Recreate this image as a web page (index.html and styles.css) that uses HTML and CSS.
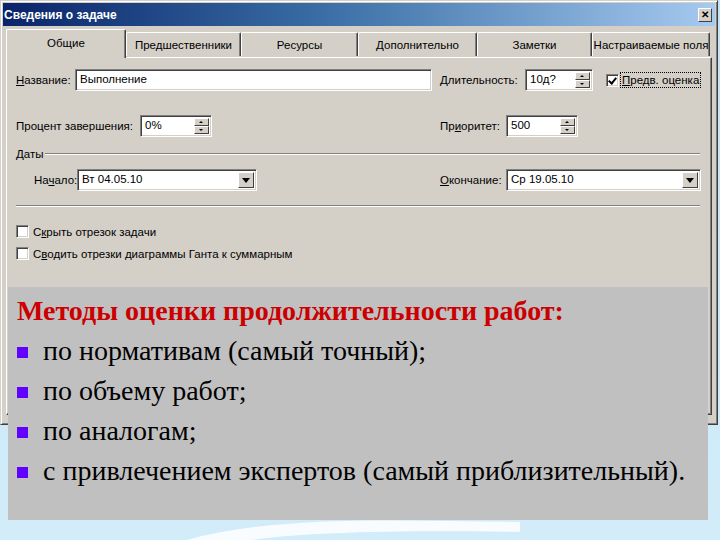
FILE: index.html
```html
<!DOCTYPE html>
<html lang="ru">
<head>
    <meta charset="UTF-8">
    <title>Сведения о задаче</title>
    <link rel="stylesheet" href="styles.css">
</head>
<body>
<div class="desk">
    <svg class="swoosh" width="720" height="120" viewBox="0 0 720 120">
        <path d="M170 125 C 260 95, 380 100, 520 102 L 520 112 C 390 110, 280 112, 225 125 Z" fill="#ffffff" opacity="0.85"/>
    </svg>

    <div class="window">
        <div class="titlebar">
            <span class="title">Сведения о задаче</span>
            <span class="close">&#x2715;</span>
        </div>

        <div class="tabs">
            <div class="tab active" style="width:120px">Общие</div>
            <div class="tab" style="width:115px">Предшественники</div>
            <div class="tab" style="width:117px">Ресурсы</div>
            <div class="tab" style="width:119px">Дополнительно</div>
            <div class="tab" style="width:115px">Заметки</div>
            <div class="tab" style="width:118px">Настраиваемые поля</div>
        </div>

        <div class="panel">
            <div class="row row-name">
                <div class="left">
                    <span class="lbl lbl-name"><u>Н</u>азвание:</span>
                    <div class="field name-field">Выполнение</div>
                </div>
                <div class="right">
                    <span class="lbl lbl-dur"><u>Д</u>лительность:</span>
                    <div class="field spin-field dur-field">10д?<span class="spin"><i class="up"></i><i class="down"></i></span></div>
                    <span class="check checked"></span>
                    <span class="focus"><u>П</u>редв. оценка</span>
                </div>
            </div>

            <div class="row row-pct">
                <div class="left">
                    <span class="lbl lbl-pct">Процент завершения:</span>
                    <div class="field spin-field pct-field">0%<span class="spin"><i class="up"></i><i class="down"></i></span></div>
                </div>
                <div class="right">
                    <span class="lbl lbl-short">Пр<u>и</u>оритет:</span>
                    <div class="field spin-field prio-field">500<span class="spin"><i class="up"></i><i class="down"></i></span></div>
                </div>
            </div>

            <div class="group">
                <span>Даты</span>
                <div class="etched"></div>
            </div>

            <div class="row row-dates">
                <div class="left indent">
                    <span class="lbl lbl-start">На<u>ч</u>ало:</span>
                    <div class="field combo start-field">Вт 04.05.10<span class="drop"><i></i></span></div>
                </div>
                <div class="right">
                    <span class="lbl lbl-short"><u>О</u>кончание:</span>
                    <div class="field combo end-field">Ср 19.05.10<span class="drop"><i></i></span></div>
                </div>
            </div>

            <div class="etched separator"></div>

            <div class="opt">
                <span class="check"></span>
                <span>С<u>к</u>рыть отрезок задачи</span>
            </div>
            <div class="opt">
                <span class="check"></span>
                <span>С<u>в</u>одить отрезки диаграммы Ганта к суммарным</span>
            </div>
        </div>
    </div>

    <div class="note">
        <h2>Методы оценки продолжительности работ:</h2>
        <ul>
            <li>по нормативам (самый точный);</li>
            <li>по объему работ;</li>
            <li>по аналогам;</li>
            <li>с привлечением экспертов (самый приблизительный).</li>
        </ul>
    </div>
</div>
</body>
</html>
```

FILE: styles.css
```css
/* страница слайда */
body {
    margin: 0;
    background-color: #c9e7f6;
}

.desk {
    position: relative;
    width: 720px;
    height: 540px;
    overflow: hidden;
    background: linear-gradient(180deg, #c3e2f4 0%, #d2ecf9 100%);
}

.swoosh {
    position: absolute;
    left: 0;
    bottom: 0;
}

/* окно диалога */
.window {
    position: relative;
    width: 718px;
    height: 425px;
    box-sizing: border-box;
    padding: 2px;
    background-color: #d4d0c8;
    border: 1px solid;
    border-color: #d4d0c8 #404040 #404040 #d4d0c8;
    box-shadow: inset 1px 1px #ffffff, inset -1px -1px #808080;
    font-family: "Liberation Sans", Arial, sans-serif;
    font-size: 11.5px;
    color: #000;
}

.titlebar {
    display: flex;
    align-items: center;
    justify-content: space-between;
    height: 23px;
    padding: 0 3px 0 1px;
    background: linear-gradient(90deg, #0a246a 0%, #3a6ea5 45%, #a6caf0 100%);
}

.title {
    color: #fff;
    font-weight: bold;
    font-size: 12px;
}

.close {
    width: 14px;
    height: 14px;
    box-sizing: border-box;
    background-color: #d4d0c8;
    border: 1px solid;
    border-color: #fff #404040 #404040 #fff;
    font-size: 10px;
    font-weight: bold;
    line-height: 12px;
    text-align: center;
}

/* вкладки */
.tabs {
    display: flex;
    align-items: flex-end;
    height: 28px;
    margin: 3px 0 0 3px;
    position: relative;
    z-index: 1;
}

.tab {
    height: 24px;
    box-sizing: border-box;
    border: 1px solid;
    border-color: #fff #404040 transparent #fff;
    border-bottom: none;
    border-radius: 2px 2px 0 0;
    box-shadow: inset -1px 0 #808080;
    text-align: center;
    line-height: 24px;
    white-space: nowrap;
    overflow: hidden;
    margin-bottom: 1px;
}

.tab.active {
    height: 29px;
    margin-bottom: -1px;
    line-height: 26px;
    background-color: #d4d0c8;
}

.panel {
    margin: 0 3px 0 3px;
    height: 358px;
    box-sizing: border-box;
    padding: 0 9px;
    border: 1px solid;
    border-color: #fff #404040 #404040 #fff;
    box-shadow: inset -1px -1px #808080;
}

/* строки формы */
.row {
    display: flex;
    align-items: center;
    height: 22px;
    white-space: nowrap;
}

.row-name { margin-top: 11px; }
.row-pct { margin-top: 24px; }
.row-dates { margin-top: 8px; }

.left {
    display: flex;
    align-items: center;
    width: 424px;
    flex: none;
}

.left.indent {
    padding-left: 18px;
    box-sizing: border-box;
}

.right {
    display: flex;
    align-items: center;
    flex: none;
}

.lbl {
    flex: none;
    white-space: nowrap;
}

.lbl-name { width: 59px; }
.lbl-pct { width: 124px; }
.lbl-start { width: 43px; }
.lbl-dur { width: 85px; }
.lbl-short { width: 66px; }

.field {
    position: relative;
    height: 22px;
    box-sizing: border-box;
    background-color: #fff;
    border: 1px solid;
    border-color: #808080 #fff #fff #808080;
    box-shadow: inset 1px 1px #404040, inset -1px -1px #d4d0c8;
    padding: 0 4px;
    line-height: 19px;
    white-space: nowrap;
}

.name-field { width: 357px; }
.dur-field { width: 68px; }
.pct-field { width: 72px; }
.prio-field { width: 72px; }
.start-field { width: 180px; }
.end-field { width: 195px; }

.spin {
    position: absolute;
    top: 2px;
    right: 2px;
    width: 15px;
    height: 16px;
    display: flex;
    flex-direction: column;
}

.spin i,
.drop {
    display: block;
    box-sizing: border-box;
    background-color: #d4d0c8;
    border: 1px solid;
    border-color: #fff #404040 #404040 #fff;
    position: relative;
}

.spin i {
    height: 8px;
}

.spin i::after {
    content: "";
    position: absolute;
    left: 4px;
    border-left: 2px solid transparent;
    border-right: 2px solid transparent;
}

.spin .up::after {
    top: 2px;
    border-bottom: 2px solid #000;
}

.spin .down::after {
    top: 2px;
    border-top: 2px solid #000;
}

.drop {
    position: absolute;
    top: 2px;
    right: 2px;
    width: 16px;
    height: 16px;
}

.drop i {
    position: absolute;
    left: 3px;
    top: 5px;
    border-left: 4px solid transparent;
    border-right: 4px solid transparent;
    border-top: 5px solid #000;
}

.check {
    display: inline-block;
    width: 13px;
    height: 13px;
    box-sizing: border-box;
    background-color: #fff;
    border: 1px solid;
    border-color: #808080 #fff #fff #808080;
    box-shadow: inset 1px 1px #404040, inset -1px -1px #d4d0c8;
    position: relative;
    flex: none;
}

.right .check {
    margin-left: 13px;
    margin-right: 2px;
}

.check.checked::after {
    content: "";
    position: absolute;
    left: 3px;
    top: 1px;
    width: 3px;
    height: 6px;
    border: solid #000;
    border-width: 0 2px 2px 0;
    transform: rotate(40deg);
}

.focus {
    outline: 1px dotted #000;
    padding: 0 1px;
    line-height: 14px;
    white-space: nowrap;
}

/* группа "Даты" */
.group {
    display: flex;
    align-items: center;
    height: 14px;
    margin-top: 10px;
}

.group span {
    margin-right: 2px;
}

.etched {
    flex: 1;
    height: 2px;
    border-top: 1px solid #808080;
    border-bottom: 1px solid #fff;
    box-sizing: border-box;
    margin-right: 2px;
}

.separator {
    margin-top: 14px;
    margin-right: 2px;
}

.opt {
    display: flex;
    align-items: center;
    gap: 4px;
    margin-top: 9px;
    height: 13px;
}

.separator + .opt {
    margin-top: 18px;
}

/* текст слайда */
.note {
    position: absolute;
    left: 8px;
    top: 287px;
    width: 700px;
    height: 233px;
    box-sizing: border-box;
    padding: 4px 0 0 9px;
    background-color: #c0c0c0;
    font-family: "Liberation Serif", "Times New Roman", serif;
    font-size: 28px;
    line-height: 40px;
    color: #000;
}

.note h2 {
    margin: 0;
    font-size: 28px;
    color: #cc0000;
}

.note ul {
    margin: 0;
    padding: 0;
    list-style: none;
}

.note li {
    display: flex;
    align-items: center;
}

.note li::before {
    content: "";
    width: 11px;
    height: 11px;
    margin-right: 15px;
    margin-top: 2px;
    background-color: #6000ff;
    flex: none;
}
```
